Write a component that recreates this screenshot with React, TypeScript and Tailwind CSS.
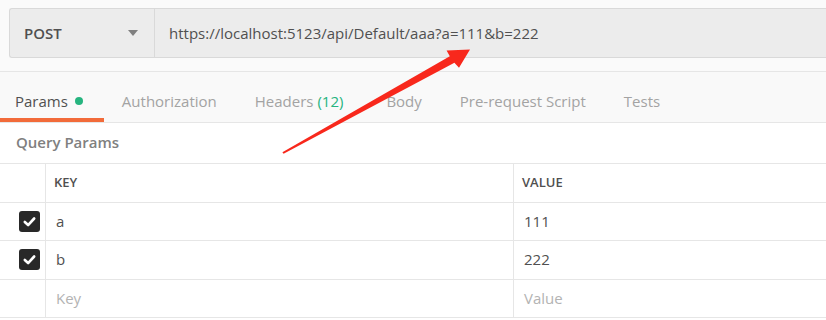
const TABS = [
  { label: "Params", active: true },
  { label: "Authorization" },
  { label: "Headers", count: "(12)" },
  { label: "Body" },
  { label: "Pre-request Script" },
  { label: "Tests" },
];

const ROWS = [
  { key: "a", value: "111", checked: true, h: "h-[38px]" },
  { key: "b", value: "222", checked: true, h: "h-[39px]" },
];

const CheckBox = () => (
  <span className="flex h-[21px] w-[21px] items-center justify-center rounded-[3px] bg-[#282828]">
    <svg viewBox="0 0 16 16" className="h-[15px] w-[15px]" fill="none" stroke="#fff" strokeWidth="2.8" strokeLinecap="round" strokeLinejoin="round">
      <path d="M3 8.5 6.5 11.8 13 4.8" />
    </svg>
  </span>
);

export default function App() {
  return (
    <div className="relative h-[320px] w-[826px] overflow-hidden bg-white font-['Open_Sans',sans-serif] text-[15px] text-[#505050]">
      {/* request bar */}
      <div className="flex h-[72px] border-b border-[#e6e6e6] bg-[#fafafa] pl-[9px] pt-[8px]">
        <div className="flex h-[50px] flex-1 rounded-l-[3px] border border-r-0 border-[#d9d9d9] bg-[#ececec]">
          <div className="flex w-[145px] items-center justify-between border-r border-[#d9d9d9] pl-[14px] pr-[16px]">
            <span className="font-semibold">POST</span>
            <svg viewBox="0 0 10 6" className="h-[6px] w-[10px]" fill="#808080">
              <path d="M0 0h10L5 6z" />
            </svg>
          </div>
          <div className="flex items-center pl-[14px]">https://localhost:5123/api/Default/aaa?a=111&amp;b=222</div>
        </div>
      </div>

      {/* tabs */}
      <div className="flex border-b border-[#e6e6e6] bg-[#f9f9f9]">
        {TABS.map((t, i) => (
          <div
            key={t.label}
            className={
              "flex items-center gap-[7px] border-b-4 pb-[5px] pt-[18px] " +
              (i === 0 ? "pl-[15px] pr-[21px] " : i === 1 ? "pl-[18px] pr-[19px] " : t.count ? "pl-[19px] pr-[24px] " : "px-[19px] ") +
              (t.active ? "border-[#f26b3a] text-[#505050]" : "border-transparent text-[#a3a3a3]")
            }
          >
            <span>
              {t.label}
              {t.count && <span className="text-[#26b47f]"> {t.count}</span>}
            </span>
            {t.active && <span className="h-[8px] w-[8px] rounded-full bg-[#26b47f]" />}
          </div>
        ))}
      </div>

      {/* params table */}
      <div className="flex h-[41px] items-center border-b border-[#e6e6e6] pl-[16px] font-semibold text-[#808080]">
        Query Params
      </div>
      <div className="grid grid-cols-[46px_468px_1fr]">
        <div className="h-[39px] border-b border-r border-[#e6e6e6]" />
        <div className="flex h-[39px] items-center border-b border-r border-[#e6e6e6] pl-[8px] text-[13px] font-semibold">KEY</div>
        <div className="flex h-[39px] items-center border-b border-[#e6e6e6] pl-[8px] text-[13px] font-semibold">VALUE</div>
        {ROWS.map((r) => (
          <div key={r.key} className="contents">
            <div className={`flex ${r.h} items-center justify-end border-b border-r border-[#e6e6e6] pr-[5px]`}>
              {r.checked && <CheckBox />}
            </div>
            <div className={`flex ${r.h} items-center border-b border-r border-[#e6e6e6] pl-[10px]`}>{r.key}</div>
            <div className={`flex ${r.h} items-center border-b border-[#e6e6e6] pl-[10px]`}>{r.value}</div>
          </div>
        ))}
        <div className="h-[38px] border-b border-r border-[#e6e6e6]" />
        <div className="flex h-[38px] items-center border-b border-r border-[#e6e6e6] pl-[10px] text-[#b3b3b3]">Key</div>
        <div className="flex h-[38px] items-center border-b border-[#e6e6e6] pl-[10px] text-[#b3b3b3]">Value</div>
      </div>

      {/* annotation arrow */}
      <svg className="pointer-events-none absolute left-0 top-0" width="826" height="320" viewBox="0 0 826 320">
        <polygon
          points="282.4,152.2 449.8,56.2 446.6,50.4 470,49.6 459,67.8 454.4,62.8 283.6,153.8"
          fill="#f8281c"
        />
      </svg>
    </div>
  );
}
